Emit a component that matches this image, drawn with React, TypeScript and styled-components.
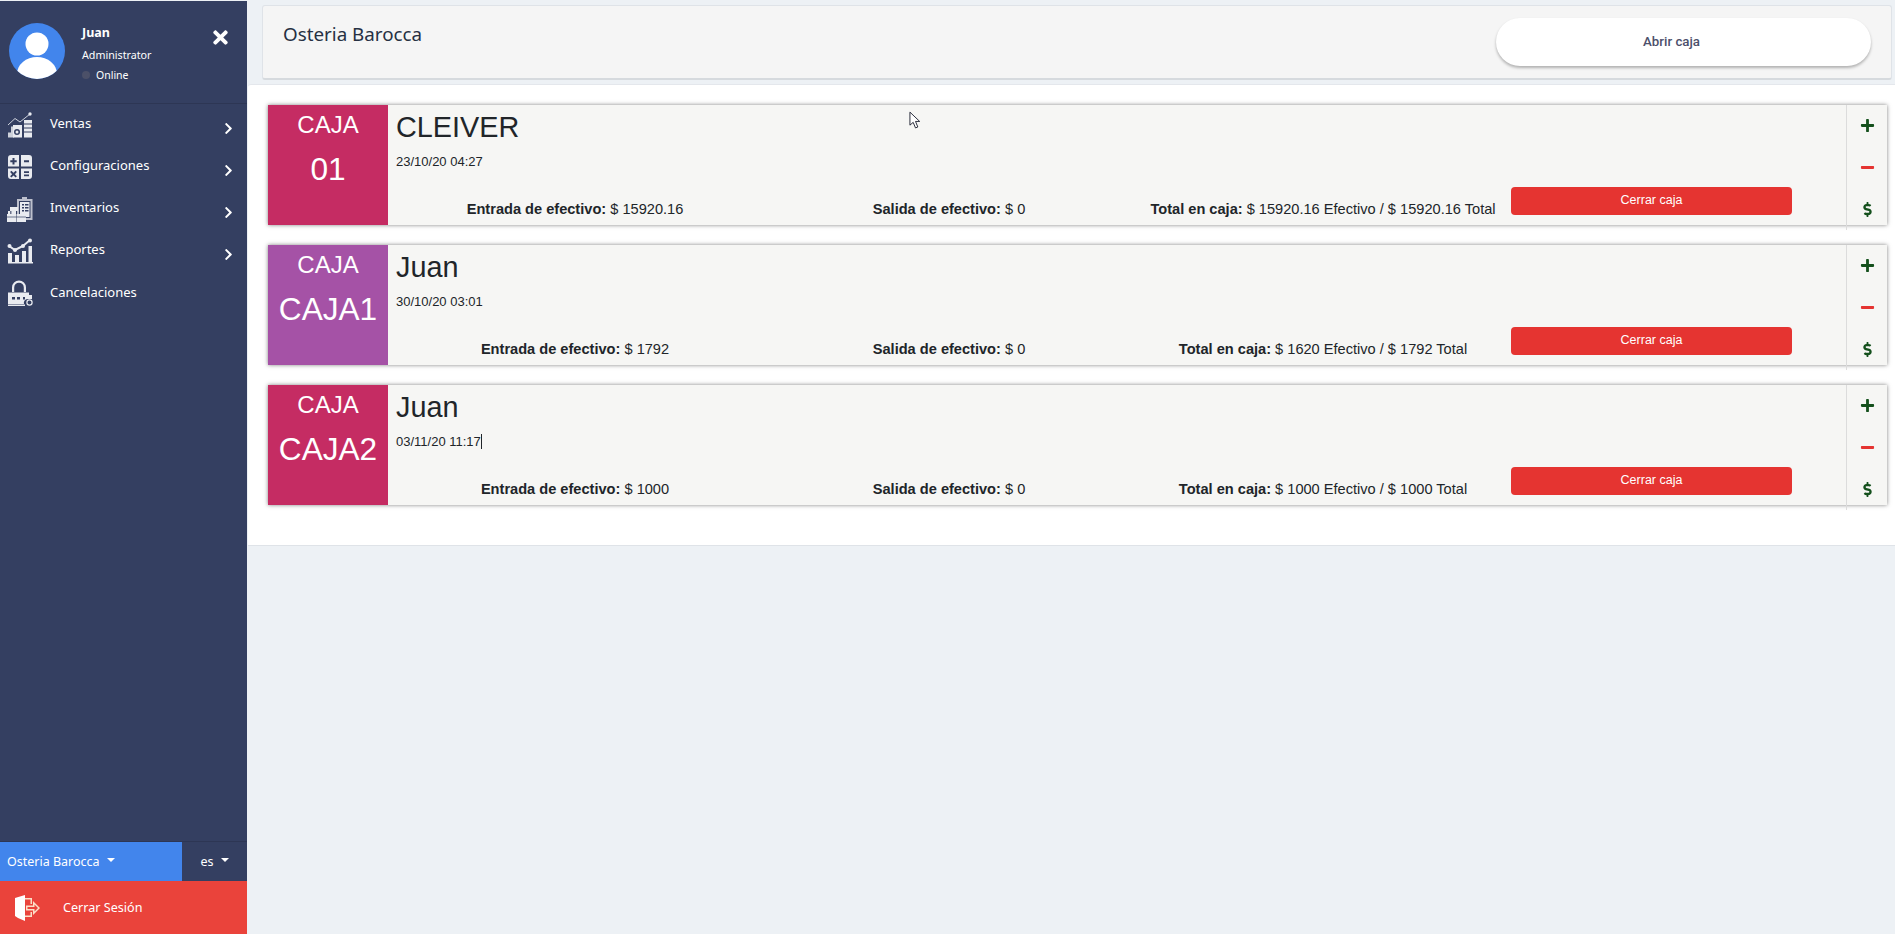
import React from 'react';
import styled, { createGlobalStyle } from 'styled-components';
import { FaPlus, FaMinus, FaDollarSign, FaTimes, FaChevronRight } from 'react-icons/fa';

const GlobalStyle = createGlobalStyle`
  html, body {
    margin: 0;
    padding: 0;
    height: 100%;
    background: #edf1f5;
    font-family: "Liberation Sans", Arial, sans-serif;
    overflow: hidden;
  }
  * {
    box-sizing: border-box;
  }
`;

const Page = styled.div`
  display: flex;
  height: 934px;
  padding-top: 1px;
`;

const Sidebar = styled.aside`
  width: 247px;
  flex-shrink: 0;
  display: flex;
  flex-direction: column;
  background: #343f61;
  color: #fff;
  font-family: "Noto Sans", sans-serif;
`;

const Profile = styled.div`
  height: 103px;
  display: flex;
  padding: 22px 0 0 9px;
  border-bottom: 1px solid #2d3654;
`;

const Avatar = styled.svg`
  width: 56px;
  height: 56px;
  flex-shrink: 0;
`;

const ProfileText = styled.div`
  margin-left: 17px;
  flex: 1;
  display: flex;
  flex-direction: column;
`;

const ProfileName = styled.div`
  font-size: 12.5px;
  font-weight: 700;
  line-height: 16px;
  margin-top: 2px;
`;

const ProfileRole = styled.div`
  font-size: 10.7px;
  line-height: 16px;
  margin-top: 6px;
`;

const ProfileStatus = styled.div`
  display: flex;
  align-items: center;
  font-size: 10.5px;
  line-height: 16px;
  margin-top: 4px;
`;

const StatusDot = styled.span`
  width: 8px;
  height: 8px;
  border-radius: 50%;
  background: #4b5068;
  margin-right: 6px;
`;

const CloseButton = styled.div`
  font-size: 21px;
  line-height: 0;
  padding-top: 4px;
  margin-right: 16px;
`;

const Menu = styled.nav`
  flex: 1;
`;

const MenuItem = styled.div`
  height: 42px;
  display: flex;
  align-items: center;
  padding-left: 7px;
  font-size: 13px;
`;

const MenuIcon = styled.svg`
  width: 26px;
  height: 26px;
  flex-shrink: 0;
  fill: #e9ebf0;
`;

const MenuLabel = styled.span<{ $low?: boolean }>`
  margin-left: 17px;
  margin-top: ${(p) => (p.$low ? '-3px' : '-5px')};
`;

const MenuArrow = styled.span`
  margin-left: auto;
  margin-right: 12px;
  margin-top: 7px;
  font-size: 13px;
  line-height: 0;
`;

const BottomRow = styled.div`
  height: 40px;
  display: flex;
  border-top: 1px solid #2d3654;
  font-size: 12.5px;
`;

const Branch = styled.div`
  width: 182px;
  background: #4285ec;
  display: flex;
  align-items: center;
  padding-left: 7px;
  padding-bottom: 1px;
`;

const Lang = styled.div`
  flex: 1;
  display: flex;
  align-items: center;
  justify-content: center;
  padding-bottom: 1px;
`;

const Caret = styled.span`
  display: inline-block;
  margin-left: 7px;
  margin-top: -3px;
  border-top: 4px solid #fff;
  border-left: 4px solid transparent;
  border-right: 4px solid transparent;
`;

const Logout = styled.div`
  height: 53px;
  display: flex;
  align-items: center;
  background: #ea433b;
  padding-left: 15px;
  font-size: 12.6px;
`;

const LogoutLabel = styled.span`
  margin-left: 23px;
`;

const Main = styled.main`
  flex: 1;
  display: flex;
  flex-direction: column;
  min-width: 0;
`;

const TopBar = styled.header`
  height: 75px;
  margin: 4px 3px 0 15px;
  display: flex;
  justify-content: space-between;
  background: #f5f5f5;
  border: 1px solid #dfe3e8;
  border-bottom: 2px solid #d6dade;
  border-radius: 3px;
  padding: 12px 20px 0 20px;
`;

const Title = styled.h1`
  margin: 3px 0 0;
  font-family: "Noto Sans", sans-serif;
  font-size: 18.8px;
  font-weight: 400;
  line-height: 26px;
  color: #263043;
`;

const OpenButton = styled.button`
  width: 375px;
  height: 48px;
  border: none;
  border-radius: 24px;
  background: #fff;
  box-shadow: 0 2px 3px rgba(0, 0, 0, 0.28);
  color: #4c4f6b;
  font-family: Roboto, sans-serif;
  font-size: 13.3px;
  font-weight: 500;
  padding: 0 24px 2px 0;
`;

const Panel = styled.section`
  margin: 4px 0 0 1px;
  height: 462px;
  background: #fff;
  border-top: 1px solid #e4e7ec;
  border-bottom: 1px solid #dfe3e8;
  border-top-left-radius: 3px;
  padding: 20px 8px 0 20px;
  display: flex;
  flex-direction: column;
  gap: 20px;
`;

const Card = styled.article`
  height: 120px;
  display: flex;
  background: #f6f6f4;
  box-shadow: 0 0 4px rgba(0, 0, 0, 0.5);
`;

const Badge = styled.div<{ $color: string }>`
  width: 120px;
  flex-shrink: 0;
  background: ${(p) => p.$color};
  color: #fff;
  text-align: center;
`;

const BadgeLabel = styled.div`
  font-size: 24px;
  line-height: 28px;
  margin-top: 6px;
`;

const BadgeValue = styled.div`
  font-size: 31.6px;
  line-height: 36px;
  margin-top: 12px;
`;

const CardBody = styled.div`
  flex: 1;
  display: flex;
  flex-direction: column;
  min-width: 0;
`;

const CardOwner = styled.div`
  font-size: 28.8px;
  line-height: 32px;
  padding: 6px 0 0 8px;
  color: #212529;
`;

const CardDate = styled.div`
  font-size: 13px;
  line-height: 16px;
  padding: 11px 0 0 8px;
  color: #212529;
`;

const TextCaret = styled.span`
  display: inline-block;
  width: 1px;
  height: 15px;
  background: #212529;
  vertical-align: -3px;
`;

const CardFooter = styled.div`
  margin-top: auto;
  display: grid;
  grid-template-columns: repeat(3, 374px) 282px;
  align-items: end;
  padding-bottom: 6px;
`;

const Stat = styled.div`
  font-size: 14.6px;
  line-height: 20px;
  text-align: center;
  color: #212529;
  white-space: nowrap;
`;

const CloseCashButton = styled.button`
  height: 28px;
  margin-left: 1px;
  margin-bottom: 4px;
  border: none;
  border-radius: 4px;
  background: #e53431;
  color: #fff;
  font-family: "Liberation Sans", sans-serif;
  font-size: 12.5px;
  padding: 0 0 3px;
`;

const Actions = styled.div`
  width: 41px;
  flex-shrink: 0;
  height: 125px;
  border-left: 1px solid #dcdcdc;
  display: flex;
  flex-direction: column;
  align-items: center;
  padding-top: 13px;
  gap: 27px;
`;

const ActionIcon = styled.span<{ $color: string }>`
  color: ${(p) => p.$color};
  font-size: 15px;
  line-height: 15px;
  height: 15px;
  display: flex;
`;

const Pointer = styled.svg`
  position: absolute;
  left: 909px;
  top: 111px;
  width: 13px;
  height: 19px;
`;

const cards = [
  {
    color: '#c52c63',
    value: '01',
    owner: 'CLEIVER',
    date: '23/10/20 04:27',
    entrada: '15920.16',
    efectivo: '15920.16',
    total: '15920.16',
  },
  {
    color: '#a552a6',
    value: 'CAJA1',
    owner: 'Juan',
    date: '30/10/20 03:01',
    entrada: '1792',
    efectivo: '1620',
    total: '1792',
  },
  {
    color: '#c52c63',
    value: 'CAJA2',
    owner: 'Juan',
    date: '03/11/20 11:17',
    entrada: '1000',
    efectivo: '1000',
    total: '1000',
    caret: true,
  },
];

const NAVY = '#343f61';

const icons = {
  ventas: (
    <>
      <path d="M1 13 L8 6.500 L13 10 L23 2" fill="none" stroke="#cfd3dd" strokeWidth="1" />
      <circle cx="23" cy="2" r="1.700" />
      <path d="M1 20.500h6v5H1zM4 14.500h6v6H4z" opacity="0.85" />
      <path d="M6 13h9v12.500H6z" />
      <circle cx="10" cy="20" r="3" fill={NAVY} />
      <circle cx="10" cy="20" r="1.500" />
      <path d="M17 8h8v3.500h-8zM17 12.500h8v3h-8zM17 16.500h8v3h-8zM17 20.500h8v5h-8z" />
    </>
  ),
  config: (
    <>
      <path d="M4 1h8v11.500H1V4a3 3 0 0 1 3-3zM14 1h8a3 3 0 0 1 3 3v8.500H14zM1 14.500h11V25H4a3 3 0 0 1-3-3zM14 14.500h11V22a3 3 0 0 1-3 3h-8z" />
      <path
        fill={NAVY}
        d="M5.500 4h2v2.200h2.200v2H7.500v2.300h-2V8.200H3.300v-2h2.200zM17 6.200h5v2h-5zM17 17.300h5v1.700h-5zM17 20.500h5v1.700h-5zM4.400 16.800l2.100 2 2.100-2 1.300 1.300-2 2.100 2 2.100-1.300 1.300-2.100-2-2.100 2-1.300-1.300 2-2.100-2-2.100z"
      />
    </>
  ),
  inventario: (
    <>
      <path d="M10 3h5V1h5v2h5.500v21H10z" opacity="0.75" />
      <path d="M12 5h11.500v17H12z" fill={NAVY} />
      <path d="M13 6h9.500v15H13z" />
      <path d="M15 8h2v1.500h-2zM18 8h3.500v1.500H18zM15 11h2v1.500h-2zM18 11h3.500v1.500H18zM15 14h2v1.500h-2zM18 14h3.500v1.500H18z" fill={NAVY} />
      <path d="M1 15h8v5H1zM3 11h8v4H3z" />
      <path d="M0 18h9v8H0zM9.500 18H19v8H9.500z" />
      <path d="M0 20.500h19v1H0z" fill={NAVY} opacity="0.7" />
      <path d="M3 15h1.500v3H3z" fill={NAVY} opacity="0.7" />
    </>
  ),
  reportes: (
    <>
      <path d="M2 8 L8 12 L16 8 L23 2" fill="none" stroke="#e9ebf0" strokeWidth="2" />
      <circle cx="2.500" cy="8" r="2" />
      <circle cx="8" cy="12" r="2" />
      <circle cx="16" cy="8" r="2" />
      <circle cx="23" cy="2.500" r="2" />
      <path d="M1 25.500V15h4v9h3v-7h4v7h3V13h4v11h2.500V8H25v16h1v1.500z" />
    </>
  ),
  cancel: (
    <>
      <path d="M5 12V7.500a7 7 0 0 1 14 0V12h-2.200V7.500a4.800 4.800 0 0 0-9.600 0V12z" />
      <path d="M1 12.500h21V15H25v4h-5a4 4 0 0 0-3 5H1z" />
      <path d="M1 24.500h17v1.500H1z" />
      <path d="M5 17h3v2.500H5zM10 17h3v2.500h-3zM16 17h2v2.500h-2z" fill={NAVY} />
      <circle cx="22.500" cy="22.500" r="2.600" fill="none" stroke="#e9ebf0" strokeWidth="1.200" />
    </>
  ),
};

const menu = [
  { label: 'Ventas', icon: icons.ventas, arrow: true },
  { label: 'Configuraciones', icon: icons.config, arrow: true },
  { label: 'Inventarios', icon: icons.inventario, arrow: true },
  { label: 'Reportes', icon: icons.reportes, arrow: true },
  { label: 'Cancelaciones', icon: icons.cancel, arrow: false },
];

export default function App() {
  return (
    <Page>
      <GlobalStyle />
      <Sidebar>
        <Profile>
          <Avatar viewBox="0 0 56 56">
            <defs>
              <clipPath id="avatar-clip">
                <circle cx="28" cy="28" r="28" />
              </clipPath>
            </defs>
            <circle cx="28" cy="28" r="28" fill="#4285ec" />
            <g clipPath="url(#avatar-clip)" fill="#fff">
              <circle cx="28" cy="21" r="11.500" />
              <ellipse cx="28" cy="51" rx="20" ry="17" />
            </g>
          </Avatar>
          <ProfileText>
            <ProfileName>Juan</ProfileName>
            <ProfileRole>Administrator</ProfileRole>
            <ProfileStatus>
              <StatusDot />
              Online
            </ProfileStatus>
          </ProfileText>
          <CloseButton>
            <FaTimes />
          </CloseButton>
        </Profile>
        <Menu>
          {menu.map((item) => (
            <MenuItem key={item.label}>
              <MenuIcon viewBox="0 0 26 26">{item.icon}</MenuIcon>
              <MenuLabel $low={!item.arrow}>{item.label}</MenuLabel>
              {item.arrow && (
                <MenuArrow>
                  <FaChevronRight />
                </MenuArrow>
              )}
            </MenuItem>
          ))}
        </Menu>
        <BottomRow>
          <Branch>
            Osteria Barocca
            <Caret />
          </Branch>
          <Lang>
            es
            <Caret />
          </Lang>
        </BottomRow>
        <Logout>
          <svg width="25" height="26" viewBox="0 0 25 26">
            <path d="M0 3 L10 0 V26 L3 23 L0 21z" fill="#fff" />
            <path d="M10 3h7v6h-1.500V4.500H10zM10 22v-1.500h5.500V17H17v5z" fill="#fbe0c8" />
            <path d="M11 10.500h7V6l7 7-7 7v-4.500h-7z" fill="#fbe0c8" />
            <path d="M12.500 12h7V9.500l3.500 3.500-3.500 3.500V14h-7z" fill="#ea433b" />
          </svg>
          <LogoutLabel>Cerrar Sesión</LogoutLabel>
        </Logout>
      </Sidebar>
      <Main>
        <TopBar>
          <Title>Osteria Barocca</Title>
          <OpenButton>Abrir caja</OpenButton>
        </TopBar>
        <Panel>
          {cards.map((card) => (
            <Card key={card.value}>
              <Badge $color={card.color}>
                <BadgeLabel>CAJA</BadgeLabel>
                <BadgeValue>{card.value}</BadgeValue>
              </Badge>
              <CardBody>
                <CardOwner>{card.owner}</CardOwner>
                <CardDate>
                  {card.date}
                  {card.caret && <TextCaret />}
                </CardDate>
                <CardFooter>
                  <Stat>
                    <b>Entrada de efectivo:</b> $ {card.entrada}
                  </Stat>
                  <Stat>
                    <b>Salida de efectivo:</b> $ 0
                  </Stat>
                  <Stat>
                    <b>Total en caja:</b> $ {card.efectivo} Efectivo / $ {card.total} Total
                  </Stat>
                  <CloseCashButton>Cerrar caja</CloseCashButton>
                </CardFooter>
              </CardBody>
              <Actions>
                <ActionIcon $color="#14501c">
                  <FaPlus />
                </ActionIcon>
                <ActionIcon $color="#e53431">
                  <FaMinus />
                </ActionIcon>
                <ActionIcon $color="#14501c">
                  <FaDollarSign />
                </ActionIcon>
              </Actions>
            </Card>
          ))}
        </Panel>
      </Main>
      <Pointer viewBox="0 0 14 20">
        <path d="M1 1 V15 L4.500 12 L7 18 L9.500 17 L7 11 L11.500 11 Z" fill="#fff" stroke="#1c2030" strokeWidth="1" />
      </Pointer>
    </Page>
  );
}
